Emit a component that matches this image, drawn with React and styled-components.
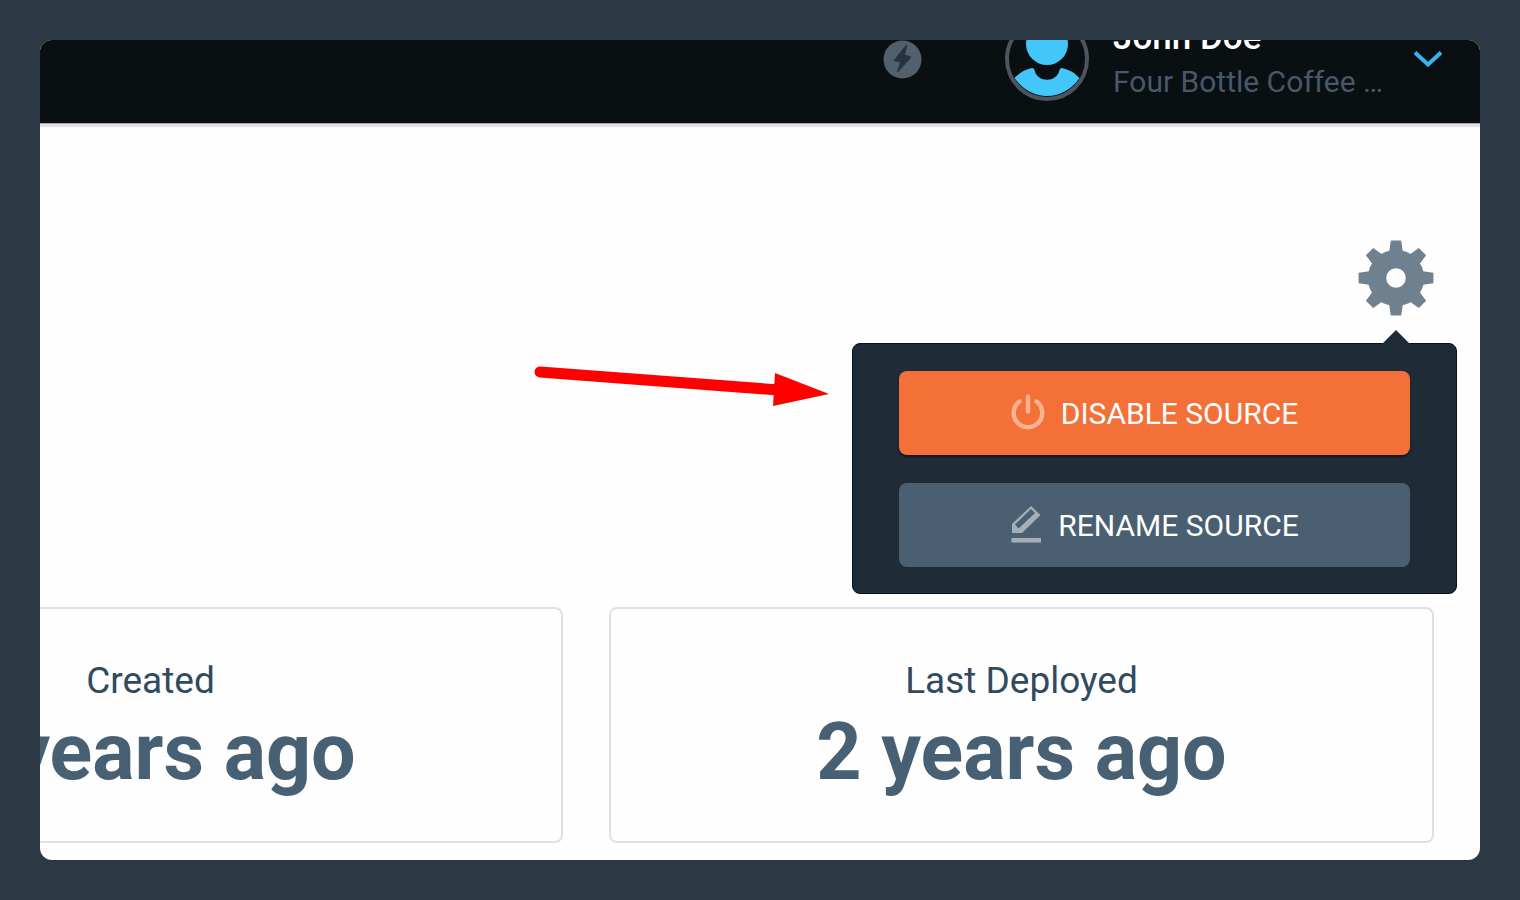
import React from "react";
import styled, { createGlobalStyle } from "styled-components";

const GlobalStyle = createGlobalStyle`
  *, *::before, *::after { box-sizing: border-box; }
  body {
    margin: 0;
    background: #2c3944;
    font-family: Roboto, "Liberation Sans", sans-serif;
  }
`;

const Page = styled.div`
  display: flex;
  min-height: 100vh;
  padding: 40px;
`;

const Window = styled.div`
  flex: 1;
  min-width: 0;
  display: flex;
  flex-direction: column;
  overflow: hidden;
  border-radius: 12px;
  background: #fefefe;
`;

const Header = styled.header`
  display: flex;
  align-items: center;
  justify-content: flex-end;
  height: 128px;
  margin-top: -45px;
  padding-right: 37px;
  background: #0a0f12;
  box-shadow: 0 1px 0 #a4a4a4, 0 4px 1px #e2e2e2;
`;

const IconButton = styled.button`
  display: flex;
  padding: 0;
  border: 0;
  background: none;
  cursor: pointer;
`;

const Account = styled.div`
  display: flex;
  align-items: center;
  gap: 24px;
  margin-left: 83px;
  margin-right: 28px;
`;

const Identity = styled.div`
  display: flex;
  flex-direction: column;
  width: 272px;
  padding-top: 2px;
  white-space: nowrap;
`;

const UserName = styled.span`
  font-size: 35px;
  font-weight: 500;
  line-height: 44px;
  color: #ffffff;
`;

const Organization = styled.span`
  font-size: 30px;
  line-height: 44px;
  color: #495868;
`;

const Main = styled.main`
  flex: 1;
  display: flex;
  flex-direction: column;
  justify-content: space-between;
  gap: 32px;
  padding: 117px 46px 17px 0;
`;

const Settings = styled.div`
  position: relative;
  align-self: flex-end;
`;

const Menu = styled.div`
  position: absolute;
  top: 103px;
  right: -23px;
  z-index: 1;
  display: flex;
  flex-direction: column;
  gap: 28px;
  width: 605px;
  padding: 27px 46px 26px;
  border: 1px solid #071320;
  border-radius: 8px;
  background: #1f2b36;
`;

const MenuPointer = styled.svg`
  position: absolute;
  top: -15px;
  right: 45px;
`;

const Callout = styled.svg`
  position: absolute;
  top: 20px;
  right: 627px;
`;

const MenuButton = styled.button`
  display: flex;
  align-items: flex-start;
  justify-content: center;
  gap: 14px;
  height: 84px;
  padding: 22px 0 0;
  border: 0;
  border-radius: 8px;
  background: ${(p) => (p.$primary ? "#f37138" : "#4a5f71")};
  box-shadow: ${(p) => (p.$primary ? "0 2px 2px #141826" : "none")};
  color: #ffffff;
  font-family: inherit;
  font-size: 30px;
  line-height: 42px;
  text-transform: uppercase;
  cursor: pointer;
`;

const Stats = styled.section`
  display: grid;
  grid-template-columns: 1fr 1fr;
  gap: 46px;
  margin-left: -302px;
`;

const StatCard = styled.article`
  display: flex;
  flex-direction: column;
  align-items: center;
  padding: 48px 0 42px;
  border: 2px solid #dde1e6;
  border-radius: 8px;
`;

const StatLabel = styled.h2`
  margin: 0;
  font-size: 37px;
  font-weight: 400;
  line-height: 48px;
  color: #304a5f;
`;

const StatValue = styled.p`
  margin: 0;
  font-size: 79px;
  font-weight: 700;
  line-height: 94px;
  color: #486074;
`;

const BoltIcon = () => (
  <svg width="39" height="39" viewBox="0 0 39 39" aria-hidden="true">
    <circle cx="19.5" cy="19.5" r="19" fill="#52606d" />
    <path
      d="M23.5 5.5 L11.5 20.5 L18 21.5 L14.8 31.5 L27.5 17 L21 15.5 Z"
      fill="#263440"
      stroke="#263440"
      strokeWidth="1.5"
      strokeLinejoin="round"
    />
  </svg>
);

const Avatar = () => (
  <svg width="84" height="84" viewBox="0 0 84 84" aria-hidden="true">
    <circle cx="42" cy="42" r="40" fill="#0a0f12" stroke="#4d545f" strokeWidth="4" />
    <circle cx="42" cy="27" r="21" fill="#43c7fa" />
    <path d="M9.5 61 Q17 53 27 51 Q29 51 29.5 53 C32 66 52 66 54.5 53 Q55 51 57 51 Q67 53 74.5 61 C58 85 26 85 9.5 61 Z" fill="#43c7fa" />
  </svg>
);

const ChevronIcon = () => (
  <svg width="30" height="18" viewBox="0 0 30 18" aria-hidden="true">
    <path d="M2 2.5 L15 14.5 L28 2.5" fill="none" stroke="#38b3ef" strokeWidth="4" />
  </svg>
);

const toothAngles = [0, 45, 90, 135, 180, 225, 270, 315];

const GearIcon = () => (
  <svg width="76" height="76" viewBox="-38 -38 76 76" aria-hidden="true">
    <g fill="#6f818f">
      <circle r="28.2" />
      {toothAngles.map((angle) => (
        <path key={angle} d="M-7 -25 L-5.2 -37.4 H5.2 L7 -25 Z" transform={`rotate(${angle})`} />
      ))}
    </g>
    <circle r="9.8" fill="#fefefe" />
  </svg>
);

const PowerIcon = () => (
  <svg width="36" height="38" viewBox="0 0 36 38" aria-hidden="true">
    <g fill="none" stroke="#ffffff" strokeOpacity="0.45" strokeWidth="4.4" strokeLinecap="round">
      <path d="M8.5 8.5 A14.3 14.3 0 1 0 25.5 8.5" />
      <path d="M17 3.5 V18.5" />
    </g>
  </svg>
);

const PencilIcon = () => (
  <svg width="34" height="38" viewBox="0 0 34 38" aria-hidden="true">
    <g fill="#ffffff" fillOpacity="0.5">
      <path fillRule="evenodd" d="M21 1 L30.5 10 L12 28 H2 V19 Z M21 4 L5 19.5 L8.5 23.5 L25 8 Z" />
      <path d="M1.5 33 H31 V37.5 H1.5 Z" />
    </g>
  </svg>
);

export default function App() {
  return (
    <>
      <GlobalStyle />
      <Page>
        <Window>
          <Header>
            <IconButton aria-label="Activity">
              <BoltIcon />
            </IconButton>
            <Account>
              <Avatar />
              <Identity>
                <UserName>John Doe</UserName>
                <Organization>Four Bottle Coffee …</Organization>
              </Identity>
            </Account>
            <IconButton aria-label="Open account menu">
              <ChevronIcon />
            </IconButton>
          </Header>
          <Main>
            <Settings>
              <IconButton aria-label="Source settings">
                <GearIcon />
              </IconButton>
              <Menu>
                <MenuPointer width="30" height="15" viewBox="0 0 30 15" aria-hidden="true">
                  <path d="M1 15 L15 1 L29 15 Z" fill="#1f2b36" />
                </MenuPointer>
                <Callout width="298" height="46" viewBox="0 0 298 46" aria-hidden="true">
                  <path d="M9 8 L248 26" stroke="#fe0000" strokeWidth="11" strokeLinecap="round" />
                  <path d="M244 9 L298 30 L242 42 Z" fill="#fe0000" />
                </Callout>
                <MenuButton $primary>
                  <PowerIcon />
                  Disable source
                </MenuButton>
                <MenuButton>
                  <PencilIcon />
                  Rename source
                </MenuButton>
              </Menu>
            </Settings>
            <Stats>
              <StatCard>
                <StatLabel>Created</StatLabel>
                <StatValue>2 years ago</StatValue>
              </StatCard>
              <StatCard>
                <StatLabel>Last Deployed</StatLabel>
                <StatValue>2 years ago</StatValue>
              </StatCard>
            </Stats>
          </Main>
        </Window>
      </Page>
    </>
  );
}
